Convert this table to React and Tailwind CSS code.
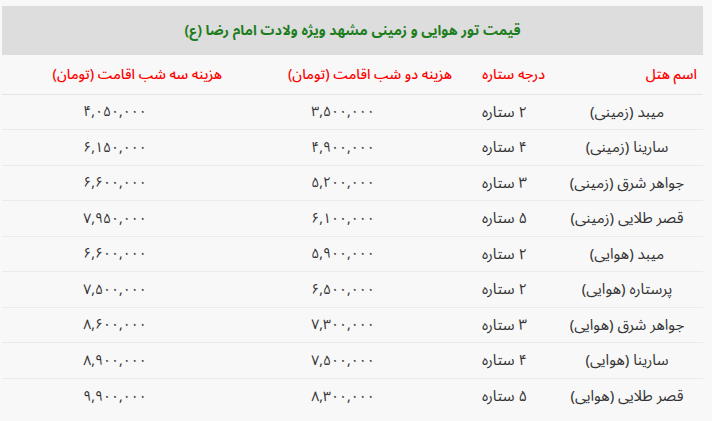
const rows = [
  ["میبد (زمینی)", "۲ ستاره", "۳,۵۰۰,۰۰۰", "۴,۰۵۰,۰۰۰"],
  ["سارینا (زمینی)", "۴ ستاره", "۴,۹۰۰,۰۰۰", "۶,۱۵۰,۰۰۰"],
  ["جواهر شرق (زمینی)", "۳ ستاره", "۵,۲۰۰,۰۰۰", "۶,۶۰۰,۰۰۰"],
  ["قصر طلایی (زمینی)", "۵ ستاره", "۶,۱۰۰,۰۰۰", "۷,۹۵۰,۰۰۰"],
  ["میبد (هوایی)", "۲ ستاره", "۵,۹۰۰,۰۰۰", "۶,۶۰۰,۰۰۰"],
  ["پرستاره (هوایی)", "۲ ستاره", "۶,۵۰۰,۰۰۰", "۷,۵۰۰,۰۰۰"],
  ["جواهر شرق (هوایی)", "۳ ستاره", "۷,۳۰۰,۰۰۰", "۸,۶۰۰,۰۰۰"],
  ["سارینا (هوایی)", "۴ ستاره", "۷,۵۰۰,۰۰۰", "۸,۹۰۰,۰۰۰"],
  ["قصر طلایی (هوایی)", "۵ ستاره", "۸,۳۰۰,۰۰۰", "۹,۹۰۰,۰۰۰"],
];

const headers = [
  "اسم هتل",
  "درجه ستاره",
  "هزینه دو شب اقامت (تومان)",
  "هزینه سه شب اقامت (تومان)",
];

export default function App() {
  return (
    <div
      dir="rtl"
      className="min-h-[421px] bg-[#f8f8f8] pt-[6px] pl-[2px] pr-[9px] font-['Noto_Sans_Arabic','DejaVu_Sans',sans-serif]"
    >
      <div className="flex h-[49px] items-center justify-center bg-[#dddddd] text-[14px] font-bold text-[#1e7d1e]">
        قیمت تور هوایی و زمینی مشهد ویژه ولادت امام رضا (ع)
      </div>
      <table className="w-full table-fixed border-collapse">
        <colgroup>
          <col className="w-[152px]" />
          <col className="w-[93px]" />
          <col className="w-[230px]" />
          <col />
        </colgroup>
        <thead>
          <tr className="h-[39px] border-b border-[#e4e4e4]">
            {headers.map((h) => (
              <th
                key={h}
                className="px-[6px] text-right text-[14px] font-medium text-[#ff0000]"
              >
                {h}
              </th>
            ))}
          </tr>
        </thead>
        <tbody>
          {rows.map((r, i) => (
            <tr
              key={i}
              className="h-[35.5px] border-b border-[#ebebeb] last:border-b-0"
            >
              {r.map((c, j) => (
                <td
                  key={j}
                  className={
                    j < 2
                      ? "text-center text-[15px] text-[#333333]"
                      : "text-center text-[14px] text-[#333333]"
                  }
                >
                  {c}
                </td>
              ))}
            </tr>
          ))}
        </tbody>
      </table>
    </div>
  );
}
